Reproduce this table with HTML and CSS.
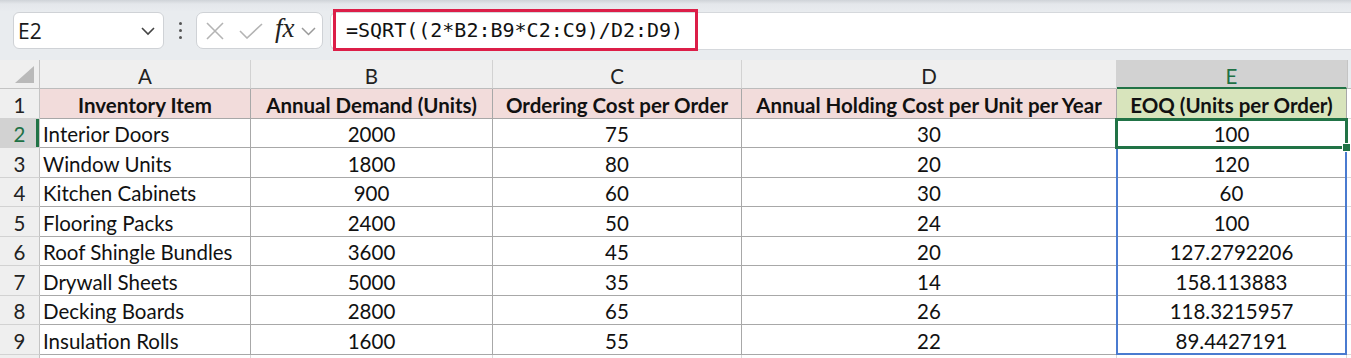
FILE: index.html
```html
<!DOCTYPE html>
<html>
<head>
<meta charset="utf-8">
<link rel="stylesheet" href="styles.css">
</head>
<body>
<div class="toolbar">
  <div class="namebox">
    <span class="nb-text">E2</span>
    <svg class="nb-chev" width="16" height="10" viewBox="0 0 16 10"><path d="M2 2 L8 8 L14 2" fill="none" stroke="#444" stroke-width="1.6"/></svg>
  </div>
  <div class="dots"><span></span><span></span><span></span></div>
  <div class="fxbox">
    <svg class="ic-x" width="20" height="18" viewBox="0 0 20 18"><path d="M2 1 L18 17 M18 1 L2 17" stroke="#b4b4b4" stroke-width="1.6" fill="none"/></svg>
    <svg class="ic-check" width="24" height="16" viewBox="0 0 24 16"><path d="M1 8 L8 15 L23 1" stroke="#b4b4b4" stroke-width="1.6" fill="none"/></svg>
    <span class="fx">fx</span>
    <svg class="ic-chev" width="15" height="9" viewBox="0 0 15 9"><path d="M1 1 L7.5 7.5 L14 1" fill="none" stroke="#9a9a9a" stroke-width="1.5"/></svg>
  </div>
  <div class="formula">
    <div class="formula-hl">=SQRT((2*B2:B9*C2:C9)/D2:D9)</div>
  </div>
</div>
<div class="sheet">
  <div class="corner"><svg width="20" height="18" viewBox="0 0 20 18"><polygon points="19,0 19,17 0,17" fill="#b9b9b9"/></svg></div>
  <div class="ch">A</div><div class="ch">B</div><div class="ch">C</div><div class="ch">D</div><div class="ch sel">E</div><div class="ch edge"></div>

  <div class="rh">1</div>
  <div class="c hd">Inventory Item</div><div class="c hd">Annual Demand (Units)</div><div class="c hd">Ordering Cost per Order</div><div class="c hd">Annual Holding Cost per Unit per Year</div><div class="c hd eoq">EOQ (Units per Order)</div><div class="c edge"></div>

  <div class="rh sel">2</div>
  <div class="c l">Interior Doors</div><div class="c">2000</div><div class="c">75</div><div class="c">30</div><div class="c cur">100<span class="range"></span><span class="active"><span class="handle"></span></span></div><div class="c edge"></div>

  <div class="rh">3</div>
  <div class="c l">Window Units</div><div class="c">1800</div><div class="c">80</div><div class="c">20</div><div class="c">120</div><div class="c edge"></div>

  <div class="rh">4</div>
  <div class="c l">Kitchen Cabinets</div><div class="c">900</div><div class="c">60</div><div class="c">30</div><div class="c">60</div><div class="c edge"></div>

  <div class="rh">5</div>
  <div class="c l">Flooring Packs</div><div class="c">2400</div><div class="c">50</div><div class="c">24</div><div class="c">100</div><div class="c edge"></div>

  <div class="rh">6</div>
  <div class="c l">Roof Shingle Bundles</div><div class="c">3600</div><div class="c">45</div><div class="c">20</div><div class="c">127.2792206</div><div class="c edge"></div>

  <div class="rh">7</div>
  <div class="c l">Drywall Sheets</div><div class="c">5000</div><div class="c">35</div><div class="c">14</div><div class="c">158.113883</div><div class="c edge"></div>

  <div class="rh">8</div>
  <div class="c l">Decking Boards</div><div class="c">2800</div><div class="c">65</div><div class="c">26</div><div class="c">118.3215957</div><div class="c edge"></div>

  <div class="rh">9</div>
  <div class="c l">Insulation Rolls</div><div class="c">1600</div><div class="c">55</div><div class="c">22</div><div class="c">89.4427191</div><div class="c edge"></div>

  <div class="rh"></div>
  <div class="c e"></div><div class="c e"></div><div class="c e"></div><div class="c e"></div><div class="c e"></div><div class="c edge"></div>
</div>
</body>
</html>
```
FILE: styles.css
```css
html, body {
  margin: 0;
  padding: 0;
  background: #ffffff;
  overflow: hidden;
}
body {
  font-family: Lato, "Liberation Sans", sans-serif;
  color: #111;
}
.toolbar {
  height: 60px;
  box-sizing: border-box;
  display: flex;
  align-items: flex-start;
  padding-top: 12px;
  background: linear-gradient(#cfd3d8 0px, #e4e7eb 4px, #e9ecef 12px, #e9ecef 100%);
}
.namebox {
  margin-left: 13px;
  width: 151px;
  height: 37px;
  box-sizing: border-box;
  background: #fff;
  border: 1px solid #cfd2d6;
  border-radius: 6px;
  display: flex;
  align-items: center;
  justify-content: space-between;
  padding: 0 7px 0 4px;
}
.nb-text {
  font-family: "Open Sans", "Liberation Sans", sans-serif;
  font-size: 21px;
  color: #1a1a1a;
}
.dots {
  width: 32px;
  height: 37px;
  display: flex;
  flex-direction: column;
  align-items: center;
  justify-content: center;
  gap: 4px;
}
.dots span {
  width: 3px;
  height: 3px;
  background: #555;
  border-radius: 50%;
}
.fxbox {
  width: 127px;
  height: 37px;
  box-sizing: border-box;
  background: #fff;
  border: 1px solid #cfd2d6;
  border-radius: 7px;
  display: flex;
  align-items: center;
  padding-left: 8px;
}
.ic-x { margin-right: 14px; }
.ic-check { margin-right: 12px; margin-top: 1px; }
.fx {
  font-family: "Liberation Serif", serif;
  font-style: italic;
  font-size: 27px;
  color: #222;
  margin-right: 6px;
  margin-top: -4px;
}
.ic-chev { margin-top: 2px; }
.formula {
  margin-left: 7px;
  flex: 1;
  height: 38px;
  box-sizing: border-box;
  background: #fff;
  border-top: 1px solid #d5d8dc;
  border-bottom: 1px solid #d5d8dc;
  border-left: 1px solid #d5d8dc;
  border-radius: 6px 0 0 6px;
}
.formula-hl {
  margin-left: 2px;
  margin-top: -4px;
  width: 365px;
  height: 42px;
  box-sizing: border-box;
  border: 3px solid #dc1e48;
  font-family: "DejaVu Sans Mono", "Liberation Mono", monospace;
  font-size: 20px;
  color: #111;
  padding-left: 10px;
  line-height: 36px;
  white-space: nowrap;
}
.sheet {
  display: grid;
  grid-template-columns: 40px 211px 242px 249px 375px 230px 1fr;
  grid-template-rows: 29px repeat(9, 29.5px) 20px;
  font-size: 20.5px;
}
.corner {
  background: #efefef;
  border-right: 1px solid #c4c4c4;
  border-bottom: 1px solid #c4c4c4;
  box-sizing: border-box;
  display: flex;
  align-items: flex-end;
  justify-content: flex-end;
  padding: 0 4px 4px 0;
}
.ch {
  background: #efefef;
  border-right: 1px solid #d2d2d2;
  border-bottom: 1px solid #bcbcbc;
  box-sizing: border-box;
  display: flex;
  align-items: center;
  justify-content: center;
  padding-top: 3px;
  font-size: 20.5px;
  color: #222;
}
.ch.sel {
  background: #d2d2d2;
  color: #1e7145;
  border-bottom: 2px solid #217346;
  padding-top: 4px;
}
.ch.edge {
  background: #e9ecef;
  border-left: 1px solid #c4c4c4;
  border-right: none;
}
.rh {
  background: #efefef;
  border-right: 1px solid #c4c4c4;
  border-bottom: 1px solid #d2d2d2;
  box-sizing: border-box;
  display: flex;
  align-items: center;
  justify-content: center;
  padding-top: 3px;
  font-size: 20.5px;
  color: #222;
}
.rh.sel {
  background: #d2d2d2;
  color: #1e7145;
  box-shadow: inset -3px 0 0 #217346;
}
.c {
  border-right: 1px solid #a8a8a8;
  border-bottom: 1px solid #a8a8a8;
  box-sizing: border-box;
  display: flex;
  align-items: center;
  justify-content: center;
  padding-top: 3px;
  white-space: nowrap;
  overflow: hidden;
  color: #111;
}
.c.l {
  justify-content: flex-start;
  padding-left: 3px;
}
.c.hd {
  background: #f2dcdb;
  font-weight: bold;
}
.c.eoq {
  background: #d8e4bc;
}
.c.e {
  border-right: 1px solid #d9d9d9;
  border-bottom: none;
}
.c.edge {
  border-right: none;
  border-bottom: 1px solid #d9d9d9;
}
.c.cur {
  position: relative;
  overflow: visible;
  z-index: 2;
}
.range {
  position: absolute;
  left: -1px;
  right: -1px;
  top: 0;
  height: 236px;
  border: 2px solid #4a7bd0;
  box-sizing: border-box;
}
.active {
  position: absolute;
  left: -2px;
  right: -2px;
  top: -1px;
  bottom: -2px;
  border: 3px solid #217346;
  box-sizing: border-box;
}
.handle {
  position: absolute;
  right: -6px;
  bottom: -6px;
  width: 7px;
  height: 7px;
  background: #217346;
  border: 1px solid #fff;
}
```
